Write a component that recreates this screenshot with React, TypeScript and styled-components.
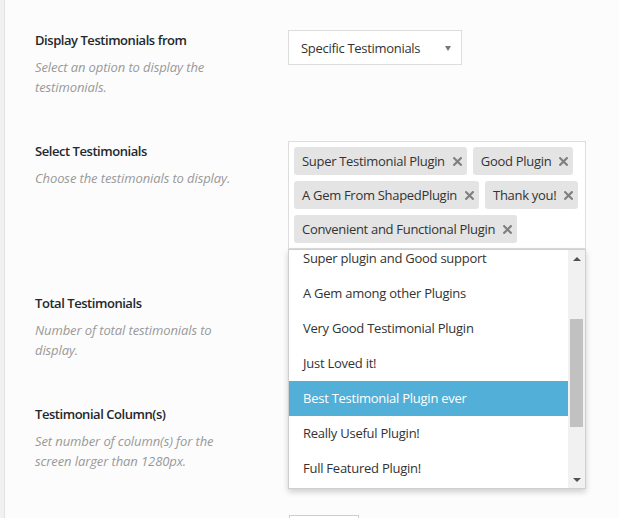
import React, { useEffect, useRef } from "react";
import styled, { createGlobalStyle } from "styled-components";

const GlobalStyle = createGlobalStyle`
  body {
    margin: 0;
    background: #f1f1f1;
    font-family: "Open Sans", "Noto Sans", sans-serif;
    color: #333;
  }
`

const Panel = styled.div`
  margin-left: 4px;
  min-height: 100vh;
  border-left: 1px solid #e2e2e2;
  background: #fcfcfc;
  padding-left: 30px;
  overflow: hidden;
`

const Row = styled.div`
  display: flex;
  padding: 30px 0 14px;
`

const LabelCol = styled.div`
  width: 253px;
  flex-shrink: 0;
`

const Label = styled.div`
  font-size: 13px;
  font-weight: 600;
  letter-spacing: -0.45px;
  line-height: 20px;
  color: #23282d;
`

const Desc = styled.div`
  margin-top: 8px;
  max-width: 205px;
  font-size: 13px;
  font-style: italic;
  letter-spacing: -0.1px;
  line-height: 19.5px;
  color: #999;
`

const FieldCol = styled.div`
  position: relative;
  flex-shrink: 0;
`

const SelectBox = styled.div`
  box-sizing: border-box;
  width: 174px;
  height: 35px;
  display: flex;
  align-items: center;
  justify-content: space-between;
  padding: 0 10px 0 12px;
  background: #fff;
  border: 1px solid #ddd;
  font-size: 13px;
  letter-spacing: -0.3px;
  color: #333;
`

const Caret = styled.span`
  width: 0;
  height: 0;
  border-left: 3px solid transparent;
  border-right: 3px solid transparent;
  border-top: 5px solid #777;
  margin-top: 2px;
`

const MultiBox = styled.div`
  box-sizing: border-box;
  width: 298px;
  display: flex;
  flex-wrap: wrap;
  gap: 6px;
  padding: 5px;
  background: #fff;
  border: 1px solid #ddd;
`

const Tag = styled.span`
  display: inline-flex;
  align-items: center;
  height: 28px;
  padding: 0 5px 0 8px;
  border-radius: 3px;
  background: #e4e4e4;
  font-size: 13px;
  letter-spacing: -0.3px;
  color: #333;
`

const Remove = styled.svg`
  margin-left: 8px;
  width: 9px;
  height: 9px;
  flex-shrink: 0;
`

const Dropdown = styled.div`
  position: absolute;
  top: 100%;
  left: 0;
  z-index: 10;
  box-sizing: border-box;
  width: 298px;
  height: 240px;
  display: flex;
  background: #fff;
  border: 1px solid #cfcfcf;
  box-shadow: 0 3px 6px rgba(0, 0, 0, 0.18);
`

const List = styled.ul`
  flex: 1;
  margin: 0;
  padding: 0;
  list-style: none;
  overflow: hidden;
`

const Option = styled.li<{ $active?: boolean }>`
  height: 35px;
  line-height: 35px;
  padding-left: 14px;
  font-size: 13px;
  letter-spacing: -0.25px;
  white-space: nowrap;
  color: ${p => (p.$active ? "#fff" : "#333")};
  background: ${p => (p.$active ? "#51afd8" : "transparent")};
`

const Scrollbar = styled.div`
  width: 17px;
  display: flex;
  flex-direction: column;
  background: #f1f1f1;
`

const Arrow = styled.div<{ $down?: boolean }>`
  height: 17px;
  display: flex;
  align-items: center;
  justify-content: center;
  &::after {
    content: "";
    width: 0;
    height: 0;
    border-left: 4px solid transparent;
    border-right: 4px solid transparent;
    ${p => (p.$down ? "border-top: 4px solid #505050;" : "border-bottom: 4px solid #505050;")}
  }
`

const Track = styled.div`
  flex: 1;
  padding: 0 2px;
`

const Thumb = styled.div`
  margin-top: 52px;
  height: 108px;
  background: #c1c1c1;
`

const NumberInput = styled.div`
  box-sizing: border-box;
  width: 70px;
  height: 35px;
  margin-left: 1px;
  background: #fff;
  border: 1px solid #ccc;
`

const selected = [
  "Super Testimonial Plugin",
  "Good Plugin",
  "A Gem From ShapedPlugin",
  "Thank you!",
  "Convenient and Functional Plugin",
]

const options = [
  "Super Testimonial Plugin",
  "Good Plugin",
  "A Gem From ShapedPlugin",
  "Super plugin and Good support",
  "A Gem among other Plugins",
  "Very Good Testimonial Plugin",
  "Just Loved it!",
  "Best Testimonial Plugin ever",
  "Really Useful Plugin!",
  "Full Featured Plugin!",
  "Thank you!",
  "Convenient and Functional Plugin",
  "Awesome Support",
]

const rows = [
  { label: "Total Testimonials", desc: "Number of total testimonials to display." },
  { label: "Testimonial Column(s)", desc: "Set number of column(s) for the screen larger than 1280px." },
  { label: "Testimonial Column(s) on Desktop", desc: "Set number of column(s) for the screen smaller than 1280px." },
]

export default function App() {
  const listRef = useRef<HTMLUListElement>(null)

  useEffect(() => {
    if (listRef.current) listRef.current.scrollTop = 114
  }, [])

  return (
    <>
      <GlobalStyle />
      <Panel>
        <Row>
          <LabelCol>
            <Label>Display Testimonials from</Label>
            <Desc>Select an option to display the testimonials.</Desc>
          </LabelCol>
          <FieldCol>
            <SelectBox>
              Specific Testimonials
              <Caret />
            </SelectBox>
          </FieldCol>
        </Row>
        <Row>
          <LabelCol>
            <Label>Select Testimonials</Label>
            <Desc>Choose the testimonials to display.</Desc>
          </LabelCol>
          <FieldCol>
            <MultiBox>
              {selected.map(s => (
                <Tag key={s}>
                  {s}
                  <Remove viewBox="0 0 9 9">
                    <path d="M1.2 1.2 L7.8 7.8 M7.8 1.2 L1.2 7.8" stroke="#808080" strokeWidth="2.2" strokeLinecap="square" />
                  </Remove>
                </Tag>
              ))}
            </MultiBox>
            <Dropdown>
              <List ref={listRef}>
                {options.map((o, i) => (
                  <Option key={i} $active={o === "Best Testimonial Plugin ever"}>{o}</Option>
                ))}
              </List>
              <Scrollbar>
                <Arrow />
                <Track>
                  <Thumb />
                </Track>
                <Arrow $down />
              </Scrollbar>
            </Dropdown>
          </FieldCol>
        </Row>
        {rows.map(r => (
          <Row key={r.label}>
            <LabelCol>
              <Label>{r.label}</Label>
              <Desc>{r.desc}</Desc>
            </LabelCol>
            <FieldCol>
              <NumberInput />
            </FieldCol>
          </Row>
        ))}
      </Panel>
    </>
  )
}
